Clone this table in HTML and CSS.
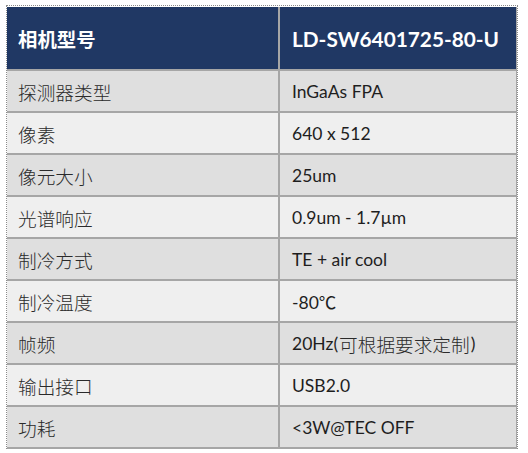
FILE: index.html
```html
<!DOCTYPE html>
<html lang="zh">
<head>
<meta charset="utf-8">
<link rel="stylesheet" href="styles.css">
</head>
<body>
<div class="frame">
  <div class="spec">
    <div class="cell head key">相机型号</div>
    <div class="cell head val">LD-SW6401725-80-U</div>

    <div class="cell dark key">探测器类型</div>
    <div class="cell dark val">InGaAs FPA</div>

    <div class="cell light key">像素</div>
    <div class="cell light val">640 x 512</div>

    <div class="cell dark key">像元大小</div>
    <div class="cell dark val">25um</div>

    <div class="cell light key">光谱响应</div>
    <div class="cell light val">0.9um - 1.7µm</div>

    <div class="cell dark key">制冷方式</div>
    <div class="cell dark val">TE + air cool</div>

    <div class="cell light key">制冷温度</div>
    <div class="cell light val">-80℃</div>

    <div class="cell dark key">帧频</div>
    <div class="cell dark val">20Hz(<span class="cjk">可根据要求定制</span>)</div>

    <div class="cell light key">输出接口</div>
    <div class="cell light val">USB2.0</div>

    <div class="cell dark key">功耗</div>
    <div class="cell dark val">&lt;3W@TEC OFF</div>
  </div>
</div>
</body>
</html>
```
FILE: styles.css
```css
html, body {
  margin: 0;
  padding: 0;
  background: #ffffff;
}

.frame {
  margin: 5px 0 0 6px;
  width: 510px;
  border: 1px dotted #8a8a8a;
  border-bottom: none;
}

.spec {
  display: grid;
  grid-template-columns: 271px 236px;
  grid-template-rows: 62px repeat(9, 40px);
  column-gap: 2px;
  row-gap: 2px;
  background: #a6a6a6;
  border-right: 1px solid #a6a6a6;
  border-bottom: 2px solid #a6a6a6;
  margin-top: 1px;
}

.cell {
  display: flex;
  align-items: center;
  font-size: 17.5px;
  color: #1e1e1e;
  white-space: nowrap;
}

.key {
  padding-left: 11px;
  font-family: "Noto Sans CJK SC", sans-serif;
  font-size: 18.67px;
  font-weight: 300;
  color: #2a2a2a;
}

.val {
  padding-left: 12px;
  font-family: Lato, "Noto Sans CJK SC", sans-serif;
}

.cjk {
  font-family: "Noto Sans CJK SC", sans-serif;
  font-size: 18.67px;
  font-weight: 300;
  color: #2a2a2a;
  padding: 0 1px;
}

.head {
  background: #203864;
  color: #ffffff;
  font-weight: 700;
}

.head.key {
  font-size: 19.4px;
  font-weight: 700;
  color: #ffffff;
}

.head.val {
  font-size: 20.8px;
}

.dark {
  background: #dfdfdf;
}

.light {
  background: #efefef;
}
```
